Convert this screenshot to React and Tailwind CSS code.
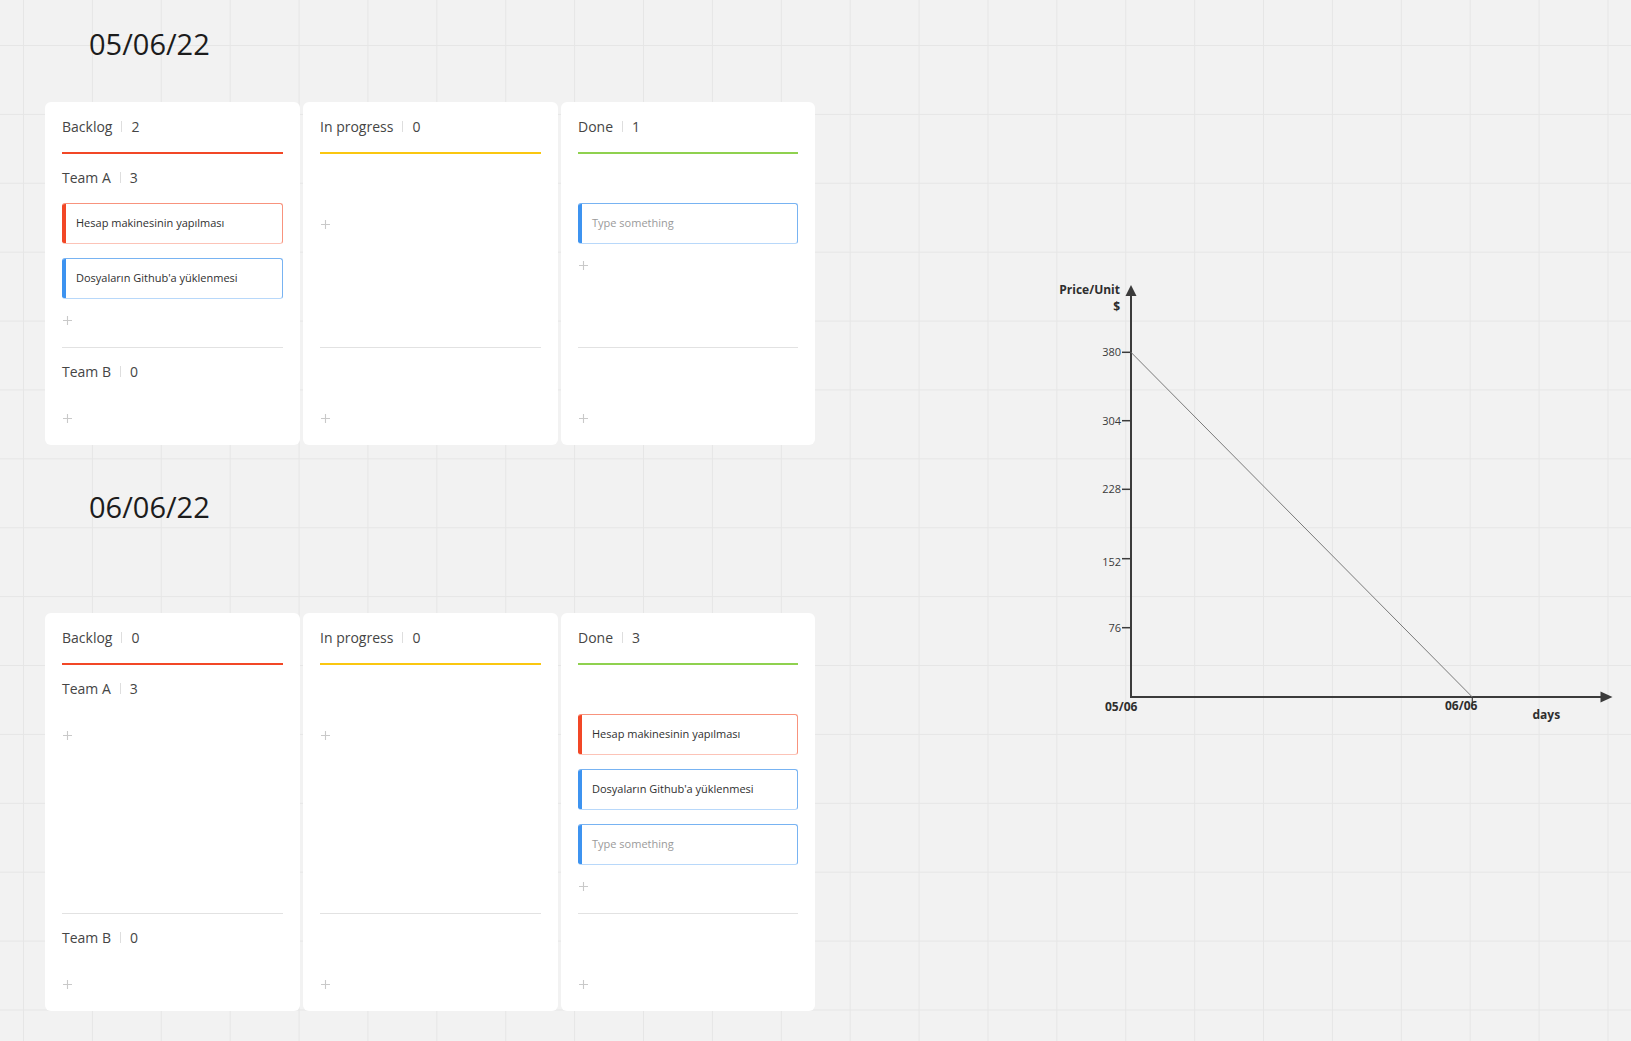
import React from 'react';

const COLUMNS = [
  { title: 'Backlog', line: 'bg-[#f24726]' },
  { title: 'In progress', line: 'bg-[#fac710]' },
  { title: 'Done', line: 'bg-[#8fd14f]' },
];

const RED = { text: 'Hesap makinesinin yapılması', tone: 'red' };
const BLUE = { text: "Dosyaların Github'a yüklenmesi", tone: 'blue' };
const EMPTY = { text: 'Type something', tone: 'blue', placeholder: true };

const boards = [
  {
    date: '05/06/22',
    counts: [2, 0, 1],
    lanes: [
      { name: 'Team A', count: 3, cards: [[RED, BLUE], [], [EMPTY]] },
      { name: 'Team B', count: 0, cards: [[], [], []] },
    ],
  },
  {
    date: '06/06/22',
    counts: [0, 0, 3],
    lanes: [
      { name: 'Team A', count: 3, cards: [[], [], [RED, BLUE, EMPTY]] },
      { name: 'Team B', count: 0, cards: [[], [], []] },
    ],
  },
];

function Label({ name, count }) {
  return (
    <div className="flex items-center h-[19px] text-[14px] text-[#454545]">
      <span>{name}</span>
      <span className="mx-[9px] w-px h-[11px] bg-[#dedede]" />
      <span>{count}</span>
    </div>
  );
}

function Plus() {
  return (
    <svg width="9" height="9" viewBox="0 0 9 9" className="ml-[1px]">
      <path d="M4.5 0v9M0 4.5h9" stroke="#c9c9c9" strokeWidth="1.1" />
    </svg>
  );
}

function Card({ card }) {
  const red = card.tone === 'red';
  return (
    <div
      className={
        red
          ? 'h-[41px] flex items-center rounded-[3px] overflow-hidden border border-l-0 border-[#f8937d] border-b-[#fcc3b7] bg-white'
          : 'h-[41px] flex items-center rounded-[3px] overflow-hidden border border-l-0 border-[#78b3f2] border-b-[#b8d8fa] bg-white'
      }
    >
      <div className={red ? 'w-[4px] self-stretch bg-[#f24726]' : 'w-[4px] self-stretch bg-[#3d93f0]'} />
      <span className={card.placeholder ? 'pl-[10px] text-[11px] text-[#9a9a9a]' : 'pl-[10px] text-[11px] text-[#2f2f2f]'}>
        {card.text}
      </span>
    </div>
  );
}

function Lane({ lane, col, last }) {
  const cards = lane.cards[col];
  return (
    <div className={last ? 'bg-white px-[17px] flex flex-col rounded-b-[6px]' : 'bg-white px-[17px] flex flex-col'}>
      <div className={last ? 'flex-1 pb-[20px]' : 'flex-1 pb-[20px] border-b border-[#e2e2e2]'}>
        <div className="h-[49px] pt-[14px]">{col === 0 && <Label name={lane.name} count={lane.count} />}</div>
        {cards.length > 0 && (
          <div className="flex flex-col gap-[14px]">
            {cards.map((c, i) => (
              <Card key={i} card={c} />
            ))}
          </div>
        )}
        <div className="mt-[14px] h-[14px] flex items-center">
          <Plus />
        </div>
      </div>
    </div>
  );
}

function Board({ board }) {
  return (
    <div className="grid grid-cols-[255px_255px_254px] gap-x-[3px]">
      {COLUMNS.map((c, i) => (
        <div key={c.title} className="bg-white rounded-t-[6px] px-[17px] pt-[15px]">
          <Label name={c.title} count={board.counts[i]} />
          <div className={`mt-[16px] h-[2px] ${c.line}`} />
        </div>
      ))}
      {board.lanes.map((lane, li) =>
        COLUMNS.map((c, ci) => (
          <Lane key={lane.name + c.title} lane={lane} col={ci} last={li === board.lanes.length - 1} />
        ))
      )}
    </div>
  );
}

// y-axis ticks: value, tick y, label offset
const TICKS = [
  [380, 82.3, 0],
  [304, 150.7, 0],
  [228, 219.3, 0],
  [152, 288.7, 3],
  [76, 357.7, 0],
];

function Chart() {
  return (
    <svg width="591" height="460" className="shrink-0 ml-[225px] mt-[270px]" style={{ fontFamily: "'Open Sans', sans-serif" }}>
      <line x1="91" y1="24" x2="91" y2="428" stroke="#3b3b3b" strokeWidth="2" />
      <polygon points="91,15 85.5,26 96.5,26" fill="#3b3b3b" />
      <line x1="90" y1="427" x2="562" y2="427" stroke="#3b3b3b" strokeWidth="2" />
      <polygon points="572.5,427 560.5,421.5 560.5,432.5" fill="#3b3b3b" />
      {TICKS.map(([t, y, off]) => (
        <g key={t}>
          <line x1="82" y1={y} x2="91" y2={y} stroke="#3b3b3b" strokeWidth="1.5" />
          <text x="81" y={y + 4 + off} textAnchor="end" fontSize="11" fill="#3a3a3a">
            {t}
          </text>
        </g>
      ))}
      <line x1="432.3" y1="427" x2="432.3" y2="436" stroke="#3b3b3b" strokeWidth="1.2" />
      <line x1="91" y1="82.3" x2="432.3" y2="427" stroke="#7a7a7a" strokeWidth="1" />
      <text x="80" y="24" textAnchor="end" fontSize="12" fontWeight="700" fill="#2e2e2e">
        Price/Unit
      </text>
      <text x="80" y="41" textAnchor="end" fontSize="12" fontWeight="700" fill="#2e2e2e">
        $
      </text>
      <text x="65" y="441" fontSize="12" fontWeight="700" fill="#2e2e2e">
        05/06
      </text>
      <text x="405" y="440" fontSize="12" fontWeight="700" fill="#2e2e2e">
        06/06
      </text>
      <text x="492.5" y="448.5" fontSize="12" fontWeight="700" fill="#2e2e2e">
        days
      </text>
    </svg>
  );
}

export default function App() {
  return (
    <div className="w-[1631px] h-[1041px] overflow-hidden flex font-['Open_Sans',sans-serif] bg-[#f2f2f2] bg-[linear-gradient(to_right,#e6e6e6_1px,transparent_1px),linear-gradient(to_bottom,#e6e6e6_1px,transparent_1px)] bg-[length:68.9px_68.9px] bg-[position:23px_45px]">
      <div className="shrink-0 pl-[45px] pt-[24px] flex flex-col">
        <h1 className="ml-[44px] text-[29px] leading-[40px] text-[#1c1c1c]">{boards[0].date}</h1>
        <div className="mt-[38px]">
          <Board board={boards[0]} />
        </div>
        <h1 className="ml-[44px] mt-[42px] text-[29px] leading-[40px] text-[#1c1c1c]">{boards[1].date}</h1>
        <div className="mt-[86px]">
          <Board board={boards[1]} />
        </div>
      </div>
      <Chart />
    </div>
  );
}
